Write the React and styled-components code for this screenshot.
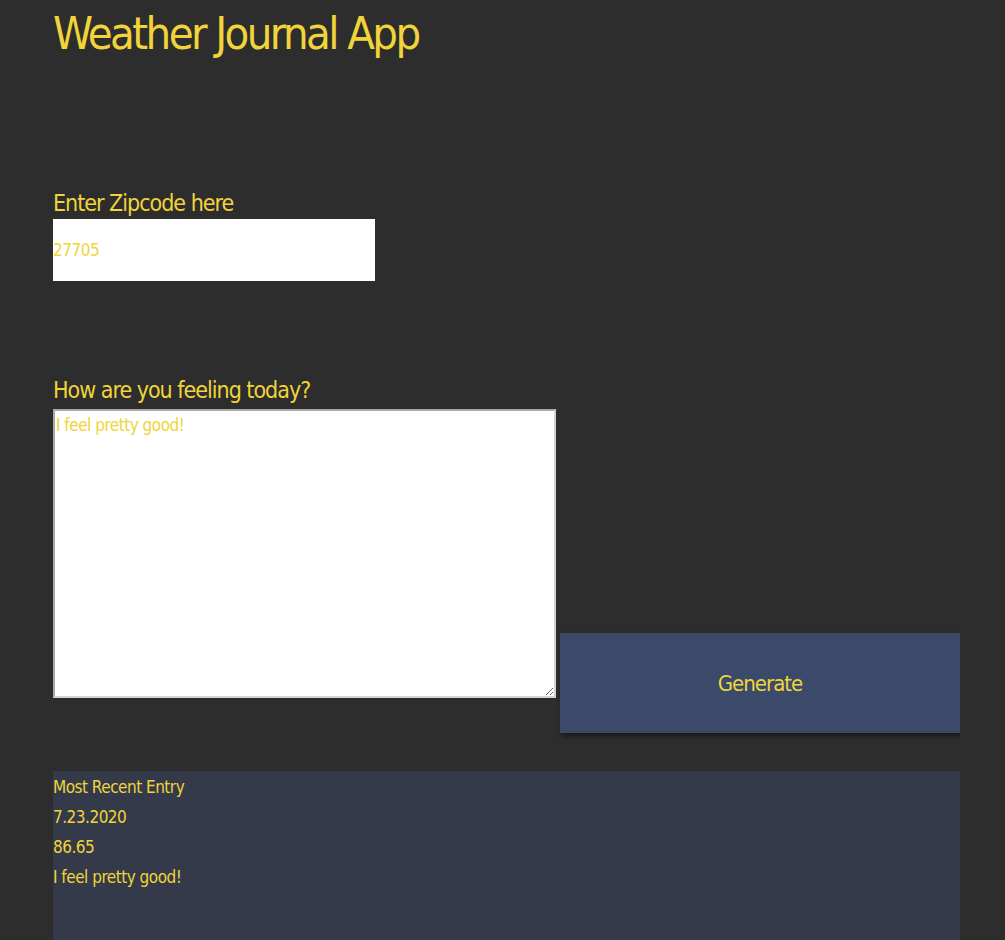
import React from 'react';
import styled, { createGlobalStyle } from 'styled-components';

const GlobalStyle = createGlobalStyle`
  html, body {
    margin: 0;
    padding: 0;
    background: #2d2d2d;
  }
  body {
    font-family: 'DejaVu Sans Condensed', 'Liberation Sans Narrow', 'Liberation Sans', sans-serif;
    color: #f0d43a;
  }
`;

const Page = styled.div`
  width: 907px;
  margin-left: 53px;
  height: 940px;
  overflow: hidden;
`;

const Title = styled.h1`
  margin: 0;
  padding-top: 7px;
  font-size: 45px;
  font-weight: 400;
  line-height: 54px;
  letter-spacing: -2.6px;
`;

const Field = styled.div`
  display: flex;
  flex-direction: column;
  margin-top: ${(p) => p.top}px;
`;

const Label = styled.label`
  font-size: 23px;
  line-height: 31px;
  height: 31px;
  letter-spacing: -1px;
`;

const ZipInput = styled.input`
  width: 322px;
  height: 62px;
  box-sizing: border-box;
  border: none;
  padding: 0;
  margin: 0;
  background: #fff;
  font-family: inherit;
  font-size: 17px;
  letter-spacing: -0.5px;
  color: #f0d43a;
  outline: none;
`;

const Row = styled.div`
  display: flex;
  align-items: flex-start;
  gap: 4px;
`;

const Feelings = styled.textarea`
  width: 503px;
  height: 289px;
  box-sizing: border-box;
  margin: 3px 0 0;
  padding: 4px 1px;
  border: 2px solid #a9a9a9;
  border-right-color: #d4d4d4;
  border-bottom-color: #d4d4d4;
  background: #fff;
  font-family: inherit;
  font-size: 17px;
  letter-spacing: -0.5px;
  color: #f0d43a;
  outline: none;
`;

const GenerateButton = styled.button`
  width: 400px;
  height: 100px;
  margin-top: 227px;
  border: none;
  padding: 0;
  background: #3b4a6b;
  box-shadow: 2px 3px 5px rgba(0, 0, 0, 0.5);
  font-family: inherit;
  font-size: 22px;
  letter-spacing: -1px;
  color: #f0d43a;
  cursor: pointer;
`;

const EntryBox = styled.section`
  margin-top: 38px;
  height: 200px;
  background: #343a49;
  padding-top: 1px;
`;

const EntryLine = styled.div`
  font-size: 17px;
  line-height: 30px;
  letter-spacing: -0.5px;
`;

export default function App() {
  return (
    <>
      <GlobalStyle />
      <Page>
        <Title>Weather Journal App</Title>
        <Field top={127}>
          <Label htmlFor='zip'>Enter Zipcode here</Label>
          <ZipInput id='zip' defaultValue='27705' />
        </Field>
        <Field top={94}>
          <Label htmlFor='feelings'>How are you feeling today?</Label>
          <Row>
            <Feelings id='feelings' defaultValue='I feel pretty good!' />
            <GenerateButton>Generate</GenerateButton>
          </Row>
        </Field>
        <EntryBox>
          <EntryLine>Most Recent Entry</EntryLine>
          <EntryLine>7.23.2020</EntryLine>
          <EntryLine>86.65</EntryLine>
          <EntryLine>I feel pretty good!</EntryLine>
        </EntryBox>
      </Page>
    </>
  );
}
